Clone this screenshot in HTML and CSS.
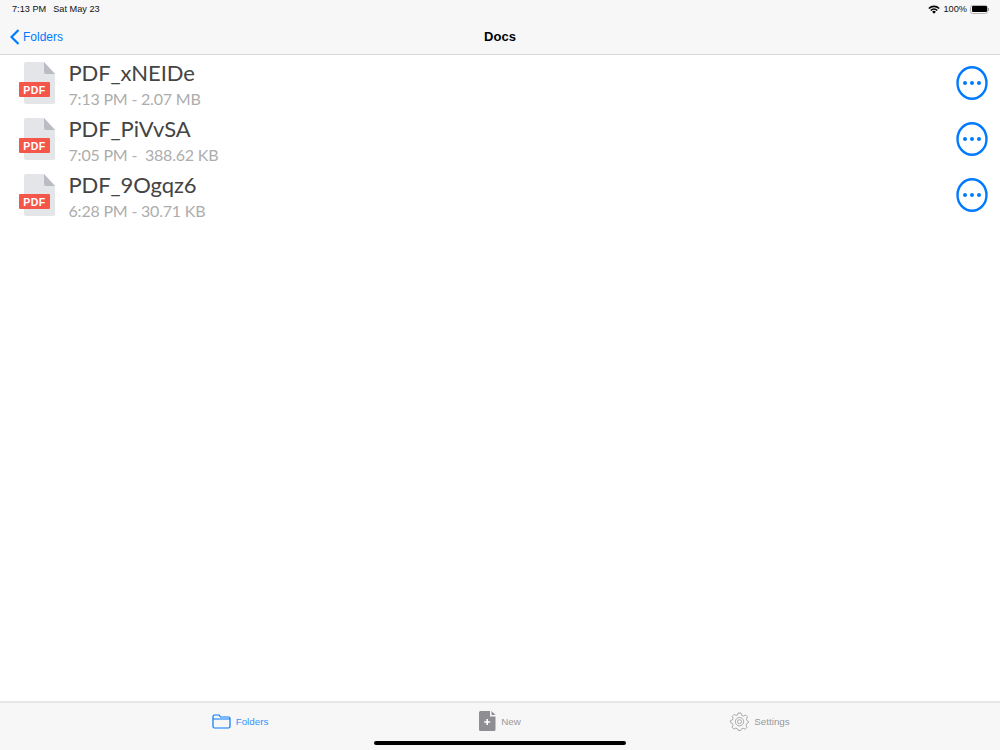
FILE: index.html

```html
<!DOCTYPE html>
<html lang="en">
<head>
  <meta charset="UTF-8">
  <title>Docs</title>
  <link rel="stylesheet" href="styles.css">
</head>
<body>
<div class="app">
  <header class="top">
    <div class="status">
      <div class="status-left"><span>7:13 PM</span><span>Sat May 23</span></div>
      <div class="status-right">
        <svg class="wifi" width="12" height="9" viewBox="0 0 12 9"><path d="M0.3 3A8 8 0 0 1 11.7 3L10.6 4.1A6.4 6.4 0 0 0 1.4 4.1Z" fill="#000"/><path d="M2.2 4.9A5.4 5.4 0 0 1 9.8 4.9L8.7 6A3.8 3.8 0 0 0 3.3 6Z" fill="#000"/><path d="M4.1 6.8A2.7 2.7 0 0 1 7.9 6.8L6 8.8Z" fill="#000"/></svg>
        <span>100%</span>
        <div class="battery"><div class="battery-fill"></div></div>
        <div class="battery-tip"></div>
      </div>
    </div>
    <div class="nav">
      <a class="back">
        <svg width="10" height="16" viewBox="0 0 10 16"><path d="M8.5 1L1.5 8L8.5 15" fill="none" stroke="#007aff" stroke-width="2.2"/></svg>
        Folders
      </a>
      <div class="nav-title">Docs</div>
    </div>
  </header>

  <main class="list">
    <div class="row">
      <svg class="pdf" width="38" height="44" viewBox="0 0 38 44">
        <path d="M6 2Q6 0 8 0H26L37 12V40Q37 42 35 42H8Q6 42 6 40Z" fill="#e3e5e8"/>
        <path d="M26 0L37 12H28Q26 12 26 10Z" fill="#b9bdc3"/>
        <rect x="1" y="20" width="31" height="15" rx="1" fill="#f4574a"/>
        <text x="16.5" y="31.5" class="pdf-label" text-anchor="middle">PDF</text>
      </svg>
      <div class="info">
        <div class="name">PDF_xNEIDe</div>
        <div class="meta">7:13 PM - 2.07 MB</div>
      </div>
      <svg class="more" width="32" height="34" viewBox="0 0 32 34"><ellipse cx="16" cy="17" rx="14.5" ry="15.8" fill="none" stroke="#007aff" stroke-width="2.4"/><circle cx="9" cy="17" r="2" fill="#007aff"/><circle cx="16" cy="17" r="2" fill="#007aff"/><circle cx="23" cy="17" r="2" fill="#007aff"/></svg>
    </div>
    <div class="row">
      <svg class="pdf" width="38" height="44" viewBox="0 0 38 44">
        <path d="M6 2Q6 0 8 0H26L37 12V40Q37 42 35 42H8Q6 42 6 40Z" fill="#e3e5e8"/>
        <path d="M26 0L37 12H28Q26 12 26 10Z" fill="#b9bdc3"/>
        <rect x="1" y="20" width="31" height="15" rx="1" fill="#f4574a"/>
        <text x="16.5" y="31.5" class="pdf-label" text-anchor="middle">PDF</text>
      </svg>
      <div class="info">
        <div class="name">PDF_PiVvSA</div>
        <div class="meta">7:05 PM -&nbsp; 388.62 KB</div>
      </div>
      <svg class="more" width="32" height="34" viewBox="0 0 32 34"><ellipse cx="16" cy="17" rx="14.5" ry="15.8" fill="none" stroke="#007aff" stroke-width="2.4"/><circle cx="9" cy="17" r="2" fill="#007aff"/><circle cx="16" cy="17" r="2" fill="#007aff"/><circle cx="23" cy="17" r="2" fill="#007aff"/></svg>
    </div>
    <div class="row">
      <svg class="pdf" width="38" height="44" viewBox="0 0 38 44">
        <path d="M6 2Q6 0 8 0H26L37 12V40Q37 42 35 42H8Q6 42 6 40Z" fill="#e3e5e8"/>
        <path d="M26 0L37 12H28Q26 12 26 10Z" fill="#b9bdc3"/>
        <rect x="1" y="20" width="31" height="15" rx="1" fill="#f4574a"/>
        <text x="16.5" y="31.5" class="pdf-label" text-anchor="middle">PDF</text>
      </svg>
      <div class="info">
        <div class="name">PDF_9Ogqz6</div>
        <div class="meta">6:28 PM - 30.71 KB</div>
      </div>
      <svg class="more" width="32" height="34" viewBox="0 0 32 34"><ellipse cx="16" cy="17" rx="14.5" ry="15.8" fill="none" stroke="#007aff" stroke-width="2.4"/><circle cx="9" cy="17" r="2" fill="#007aff"/><circle cx="16" cy="17" r="2" fill="#007aff"/><circle cx="23" cy="17" r="2" fill="#007aff"/></svg>
    </div>
  </main>

  <footer class="tabs">
    <div class="tab tab-active">
      <svg width="19" height="15" viewBox="0 0 19 15"><path d="M1 12.5V2.5Q1 1 2.5 1H7L8.5 3H16.5Q18 3 18 4.5V12.5Q18 14 16.5 14H2.5Q1 14 1 12.5ZM1 5H18" fill="none" stroke="#007aff" stroke-width="1.2"/></svg>
      <span>Folders</span>
    </div>
    <div class="tab">
      <svg width="17" height="20" viewBox="0 0 17 20"><path d="M1.5 0H11V5.5H16.5V18.5Q16.5 20 15 20H1.5Q0 20 0 18.5V1.5Q0 0 1.5 0Z" fill="#8e8e93"/><path d="M12.5 0L16.5 4H12.5Z" fill="#8e8e93"/><path d="M8.2 8V14M5.2 11H11.2" stroke="#fff" stroke-width="1.6"/></svg>
      <span>New</span>
    </div>
    <div class="tab">
      <svg width="19" height="19" viewBox="0 0 19 19" fill="none" stroke="#98989c" stroke-width="0.8"><path d="M8 1H11L11.5 3.2L13.6 4.1L15.5 2.9L17.6 5L16.4 6.9L17.2 8.9L18.5 9.5V10.5L16.9 11.4L16.1 13.4L16.9 15.4L15 17.3L13.2 16.2L11.3 17L10.8 18.5H8.2L7.7 16.9L5.8 16.1L3.9 17.1L2 15.1L3.1 13.3L2.3 11.3L0.5 10.5V8.5L2.4 8L3.2 6L2.2 4.3L4.1 2.4L5.9 3.4L7.8 2.7Z"/><circle cx="9.5" cy="9.7" r="4.2"/><circle cx="9.5" cy="9.7" r="2"/></svg>
      <span>Settings</span>
    </div>
    <div class="home-bar"></div>
  </footer>
</div>
</body>
</html>
```

FILE: styles.css

```css
* {
  box-sizing: border-box;
}
body {
  margin: 0;
  background: #ffffff;
  font-family: "Liberation Sans", Arial, sans-serif;
}
.app {
  width: 1000px;
  height: 750px;
  display: flex;
  flex-direction: column;
  overflow: hidden;
}
.top {
  height: 55px;
  background: #f7f7f8;
  border-bottom: 1px solid #d9d9dc;
}
.status {
  height: 18px;
  padding: 0 11px 0 12px;
  display: flex;
  justify-content: space-between;
  align-items: center;
  font-size: 9.2px;
  color: #111;
}
.status-left {
  display: flex;
  gap: 7px;
}
.status-right {
  display: flex;
  align-items: center;
  gap: 3px;
}
.wifi {
  margin-right: 1px;
}
.battery {
  width: 18px;
  height: 9px;
  padding: 0.5px;
  border: 1px solid #b5b5b5;
  border-radius: 2.5px;
}
.battery-fill {
  height: 100%;
  background: #000;
  border-radius: 1px;
}
.battery-tip {
  width: 1px;
  height: 3px;
  margin-left: -3px;
  background: #999;
}
.nav {
  height: 36px;
  position: relative;
  display: flex;
  align-items: center;
  justify-content: center;
}
.back {
  position: absolute;
  left: 10px;
  top: 11px;
  display: flex;
  align-items: center;
  gap: 3px;
  color: #007aff;
  font-size: 12px;
  line-height: 16px;
}
.nav-title {
  font-size: 13px;
  font-weight: 700;
  color: #000;
}
.list {
  flex: 1;
}
.row {
  height: 56px;
  padding: 7px 12px 0 18px;
  display: flex;
  align-items: flex-start;
}
.pdf {
  flex: none;
}
.pdf-label {
  font-family: "Liberation Sans", Arial, sans-serif;
  font-size: 10.5px;
  font-weight: 700;
  letter-spacing: 0.5px;
  fill: #ffffff;
}
.info {
  flex: 1;
  margin-left: 12.5px;
  margin-top: -1px;
  font-family: Lato, sans-serif;
}
.name {
  font-size: 22px;
  line-height: 24px;
  letter-spacing: -0.1px;
  color: #444444;
}
.meta {
  font-size: 16px;
  line-height: 20px;
  letter-spacing: -0.2px;
  margin-top: 4px;
  color: #adadad;
}
.more {
  flex: none;
  margin-top: 4px;
}
.tabs {
  height: 49px;
  position: relative;
  background: #f7f7f8;
  border-top: 2px solid #e6e6e8;
  display: flex;
  justify-content: center;
  padding-top: 7px;
}
.tab {
  width: 260px;
  height: 22px;
  display: flex;
  align-items: center;
  justify-content: center;
  gap: 5px;
  font-size: 9.8px;
  color: #98989c;
}
.tab-active {
  color: #3395ff;
}
.home-bar {
  position: absolute;
  left: 374px;
  bottom: 5px;
  width: 252px;
  height: 4px;
  border-radius: 2px;
  background: #000;
}
```
